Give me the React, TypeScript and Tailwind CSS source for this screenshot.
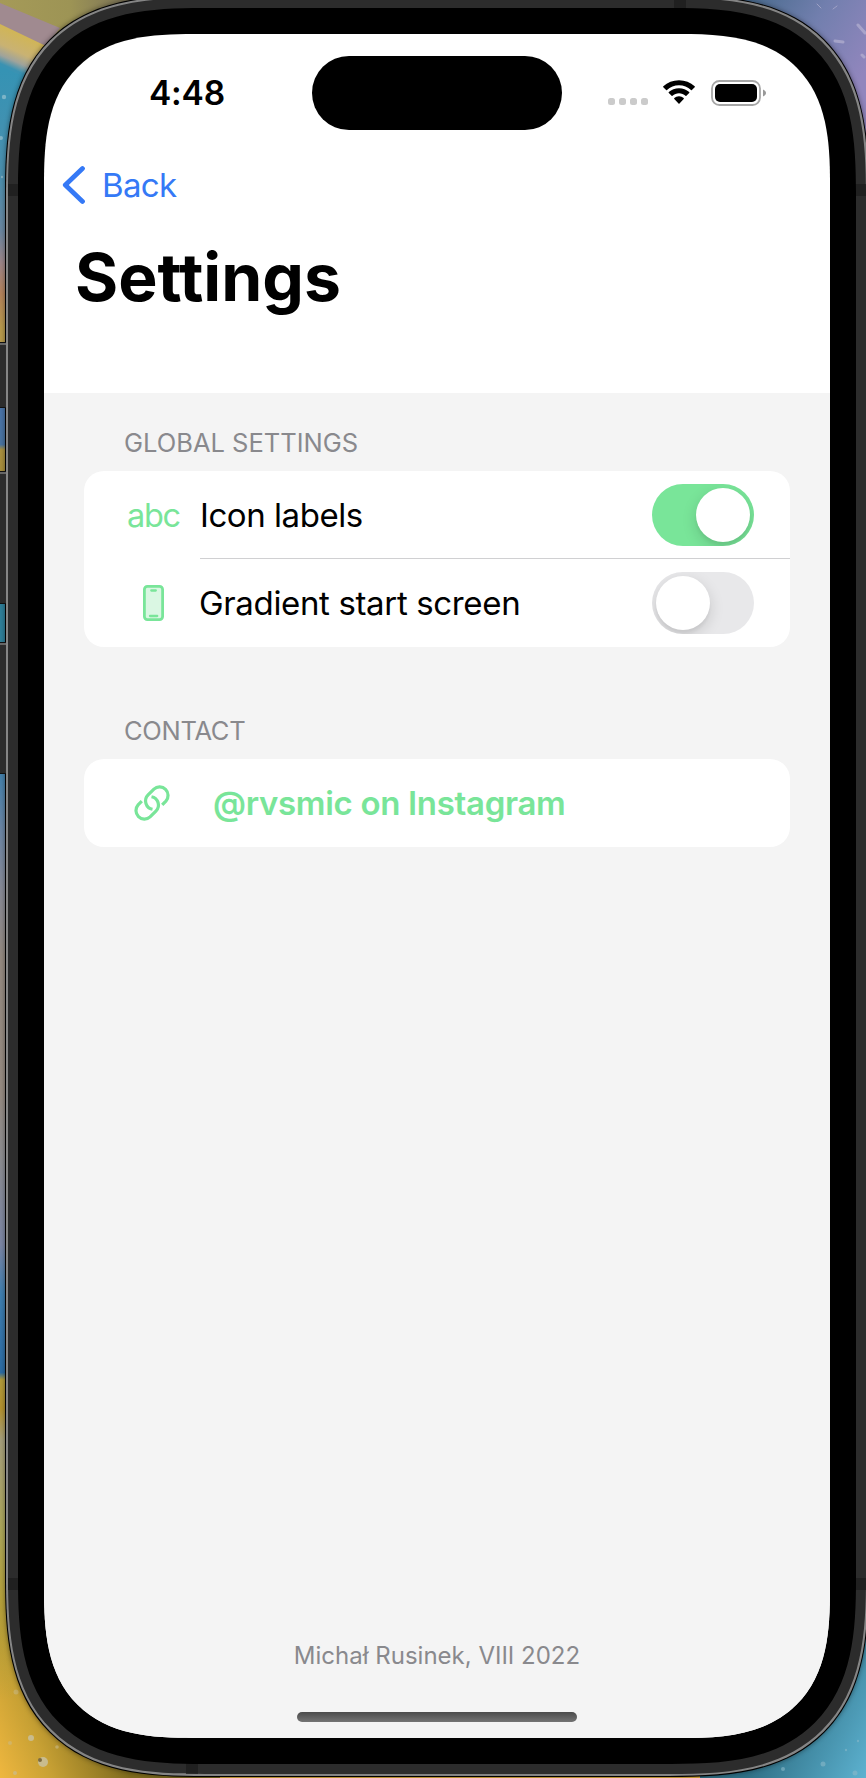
import React from 'react';

function Toggle({ on }: { on: boolean }) {
  return (
    <div
      role="switch"
      aria-checked={on}
      className={
        on
          ? 'flex h-[62px] w-[102px] shrink-0 justify-end overflow-hidden rounded-full bg-[#79e599] p-1'
          : 'flex h-[62px] w-[102px] shrink-0 justify-start overflow-hidden rounded-full bg-[#e8e8ea] p-1'
      }
    >
      <div className="size-[54px] rounded-full bg-white shadow-[0_5px_15px_rgba(0,0,0,0.14),0_4px_3px_rgba(0,0,0,0.04)]" />
    </div>
  );
}

function StatusBar() {
  return (
    <div className="flex h-[118px] shrink-0 items-start pt-[22px]">
      <div className="flex h-[74px] w-[268px] items-center pl-[105px] pt-px text-[33.5px] font-semibold tracking-[-0.2px]">4:48</div>
      <div className="h-[74px] w-[250px] rounded-full bg-black" />
      <div className="flex h-[74px] flex-1 items-center pl-[46px]">
        <div className="mt-[16px] flex gap-[4px]">
          {[0, 1, 2, 3].map((i) => (
            <span key={i} className="size-[7px] rounded-[2.5px] bg-[#cbcbcb]" />
          ))}
        </div>
        <svg className="ml-[14px] h-[26px] w-[34px]" viewBox="0 0 34 26" fill="#000">
          <path d="M17 5.200c4.600 0 8.800 1.800 12 4.800.3.300.6.300.9 0l2.800-2.800c.3-.3.300-.6 0-.9C28.500 2.400 23 .3 17 .3S5.500 2.400 1.300 6.300c-.3.300-.3.600 0 .9L4.100 10c.3.300.6.300.9 0 3.200-3 7.400-4.800 12-4.800z" />
          <path d="M17 13.300c2.500 0 4.700.9 6.500 2.500.3.300.6.300.9 0l2.800-2.700c.3-.3.300-.7 0-1C24.500 9.700 20.900 8.300 17 8.300S9.500 9.700 6.800 12.100c-.3.300-.3.700 0 1l2.800 2.700c.3.300.6.300.9 0 1.800-1.600 4-2.500 6.500-2.500z" />
          <path d="M21.700 18.900c.3-.3.300-.7 0-1A7.300 7.300 0 0 0 17 16.300a7.300 7.300 0 0 0-4.700 1.600c-.3.300-.3.700 0 1l4.200 4.500c.3.300.7.300 1 0z" />
        </svg>
        <svg className="ml-[15px] h-[26px] w-[56px]" viewBox="0 0 56 26">
          <rect x="1" y="1" width="48" height="24" rx="7.500" fill="none" stroke="#a6a6a6" strokeWidth="1.800" />
          <rect x="4" y="4" width="42" height="18" rx="5" fill="#000" />
          <path d="M52 9.500c1.900.7 3 2 3 3.500s-1.100 2.800-3 3.500z" fill="#999" />
        </svg>
      </div>
    </div>
  );
}

function Screen() {
  return (
    <div className="flex h-[1704px] w-[786px] flex-col overflow-hidden rounded-[150px] bg-white [corner-shape:superellipse(1.46)]">
      <StatusBar />
      <div className="flex h-[66px] shrink-0 items-center pl-[18px] text-[#3579f6]">
        <svg className="h-[38px] w-[24px]" viewBox="0 0 24 38" fill="none" stroke="#3579f6" strokeWidth="4.800" strokeLinecap="round" strokeLinejoin="round">
          <path d="M20.500 2.600 3.300 19l17.200 16.400" />
        </svg>
        <span className="pl-[16px] pt-[2px] text-[33px] tracking-[-0.65px]">Back</span>
      </div>
      <h1 className="h-[175px] shrink-0 pl-[31px] pt-[19px] text-[66px] font-bold leading-[80px] tracking-[-0.05px]">Settings</h1>
      <main className="flex flex-1 flex-col bg-[#f4f4f4] px-[40px]">
        <section className="pt-[34px]">
          <h2 className="pl-[40px] text-[25.5px] leading-[32px] text-[#89898d]">GLOBAL SETTINGS</h2>
          <div className="mt-[12px] flex h-[176px] flex-col rounded-[20px] bg-white pl-[44px]">
            <div className="flex h-[88px]">
              <div className="flex w-[72px] items-center pt-[2px] text-[32.5px] tracking-[-1.3px] text-[#79e599]">
                <span className="-ml-px">abc</span>
              </div>
              <div className="flex flex-1 items-center justify-between border-b border-[#d0d0d2] pr-[36px]">
                <span className="pt-[2px] text-[33px] tracking-[-0.45px]">Icon labels</span>
                <Toggle on />
              </div>
            </div>
            <div className="flex h-[88px]">
              <div className="flex w-[71px] items-center pl-[15px]">
                <svg className="h-[36px] w-[21px]" viewBox="0 0 21 36" fill="none" stroke="#79e599">
                  <rect x="1.400" y="1.400" width="18.200" height="33.200" rx="3" fill="#daf7e3" strokeWidth="2.800" />
                  <path d="M8.300 5.500h4.500M7 31h7.200" strokeWidth="2.300" strokeLinecap="round" />
                </svg>
              </div>
              <div className="flex flex-1 items-center justify-between pr-[36px]">
                <span className="pt-[2px] text-[33px] tracking-[-0.35px]">Gradient start screen</span>
                <Toggle on={false} />
              </div>
            </div>
          </div>
        </section>
        <section className="pt-[68px]">
          <h2 className="pl-[40px] text-[25.5px] leading-[32px] tracking-[-0.3px] text-[#89898d]">CONTACT</h2>
          <div className="mt-[12px] flex h-[88px] items-center rounded-[20px] bg-white pl-[50px] text-[#79e599]">
            <svg className="size-[36px]" viewBox="0 0 36 36" fill="none" stroke="#79e599" strokeWidth="3.200">
              <path d="M28.200 19.800 31.900 16.100A8.500 8.500 0 0 0 19.900 4.100L14.100 9.900A8.500 8.500 0 0 0 18.500 24.300" />
              <path d="M7.800 16.200 4.100 19.900A8.500 8.500 0 0 0 16.100 31.900L21.900 26.100A8.500 8.500 0 0 0 17.500 11.700" />
            </svg>
            <span className="pl-[43px] pt-[2px] text-[33px] font-semibold tracking-[-0.32px]">@rvsmic on Instagram</span>
          </div>
        </section>
        <footer className="mt-auto flex flex-col items-center pb-[16px]">
          <p className="text-[24px] leading-[32px] text-[#89898d]">Michał Rusinek, VIII 2022</p>
          <div className="mt-[40px] h-[10px] w-[280px] rounded-full bg-linear-to-b from-[#4b4b4b] to-[#747474]" />
        </footer>
      </main>
    </div>
  );
}

function SideButtons() {
  return (
    <div className="absolute left-0 top-[342px] flex w-[6px] flex-col">
      <div className="h-[66px] border-y border-[#111] bg-[#2c2c2c]">
        <div className="h-[2px] bg-[#666]" />
      </div>
      <div className="mt-[63px] h-[133px] border-y border-[#111] bg-[#2c2c2c]">
        <div className="h-[2px] bg-[#666]" />
      </div>
      <div className="mt-[38px] h-[132px] border-y border-[#111] bg-[#2c2c2c]">
        <div className="h-[2px] bg-[#666]" />
      </div>
    </div>
  );
}

function Wallpaper() {
  return (
    <svg className="absolute inset-0 h-full w-full" viewBox="0 0 866 1778">
      <defs>
        <linearGradient id="side" x1="0" y1="0" x2="0" y2="1778" gradientUnits="userSpaceOnUse">
          <stop offset="0.040" stopColor="#3593b4" />
          <stop offset="0.100" stopColor="#4c8fae" />
          <stop offset="0.130" stopColor="#6b87a0" />
          <stop offset="0.148" stopColor="#9d8688" />
          <stop offset="0.165" stopColor="#b4835c" />
          <stop offset="0.185" stopColor="#b79a4c" />
          <stop offset="0.200" stopColor="#b79a4c" />
          <stop offset="0.230" stopColor="#4a74a8" />
          <stop offset="0.250" stopColor="#4a74a0" />
          <stop offset="0.253" stopColor="#ab9240" />
          <stop offset="0.266" stopColor="#a68d3c" />
          <stop offset="0.300" stopColor="#2f7f99" />
          <stop offset="0.370" stopColor="#2f7f99" />
          <stop offset="0.435" stopColor="#4481ab" />
          <stop offset="0.467" stopColor="#6c86a4" />
          <stop offset="0.500" stopColor="#878a96" />
          <stop offset="0.540" stopColor="#958a80" />
          <stop offset="0.615" stopColor="#968b82" />
          <stop offset="0.650" stopColor="#8d8d90" />
          <stop offset="0.700" stopColor="#7c86a4" />
          <stop offset="0.728" stopColor="#3f7fb0" />
          <stop offset="0.772" stopColor="#2c6ca4" />
          <stop offset="0.776" stopColor="#b29b3a" />
          <stop offset="0.792" stopColor="#b3922f" />
          <stop offset="0.810" stopColor="#a69f7c" />
          <stop offset="0.860" stopColor="#aca65a" />
          <stop offset="0.900" stopColor="#b5a03a" />
          <stop offset="1" stopColor="#e0af3a" />
        </linearGradient>
        <linearGradient id="topLeft" x1="0" y1="0" x2="140" y2="0" gradientUnits="userSpaceOnUse">
          <stop offset="0" stopColor="#a59a58" />
          <stop offset="0.500" stopColor="#9d9455" />
          <stop offset="1" stopColor="#736b58" />
        </linearGradient>
        <linearGradient id="yellowBand" x1="22" y1="30" x2="6" y2="66" gradientUnits="userSpaceOnUse">
          <stop offset="0" stopColor="#d2b650" />
          <stop offset="0.550" stopColor="#c9b273" />
          <stop offset="0.800" stopColor="#9fa39b" />
          <stop offset="1" stopColor="#3a92b2" />
        </linearGradient>
        <linearGradient id="topRight" x1="750" y1="0" x2="866" y2="70" gradientUnits="userSpaceOnUse">
          <stop offset="0" stopColor="#4a6b8e" />
          <stop offset="0.500" stopColor="#727fae" />
          <stop offset="1" stopColor="#9186bd" />
        </linearGradient>
        <linearGradient id="bottomLeft" x1="0" y1="1778" x2="110" y2="1730" gradientUnits="userSpaceOnUse">
          <stop offset="0" stopColor="#efb73f" />
          <stop offset="0.400" stopColor="#c8a134" />
          <stop offset="1" stopColor="#7d6a1c" />
        </linearGradient>
        <linearGradient id="bottomFade" x1="0" y1="1600" x2="0" y2="1700" gradientUnits="userSpaceOnUse">
          <stop offset="0" stopColor="#b5a03a" />
          <stop offset="1" stopColor="#b5a03a" stopOpacity="0" />
        </linearGradient>
        <linearGradient id="bottomRight" x1="770" y1="1730" x2="866" y2="1778" gradientUnits="userSpaceOnUse">
          <stop offset="0" stopColor="#2f7086" />
          <stop offset="1" stopColor="#5db2d0" />
        </linearGradient>
      </defs>
      <rect width="866" height="1778" fill="url(#side)" />
      <path d="M0 0h160v40H60L30 75 0 62z" fill="url(#topLeft)" />
      <path d="M0 22 50 44 32 80 0 66z" fill="url(#yellowBand)" />
      <path d="M0 3 60 28 46 46 0 24z" fill="#a08a90" />
      <g fill="#a9cbd6" opacity="0.600">
        <circle cx="4" cy="97" r="2.200" />
        <circle cx="1" cy="138" r="2" />
        <circle cx="2" cy="177" r="1.200" />
      </g>
      <rect x="700" width="166" height="160" fill="url(#topRight)" />
      <g stroke="#bdb9d6" strokeLinecap="round" opacity="0.600">
        <path d="m835 41 8 1" strokeWidth="3" />
        <path d="m858 25 7 8M862 55l2 2" strokeWidth="3" />
        <path d="m817 4 4 4M833 9l4-3" strokeWidth="1" />
      </g>
      <path d="M0 1600h220v178H0z" fill="url(#bottomLeft)" />
      <path d="M0 1600h220v100H0z" fill="url(#bottomFade)" />
      <g fill="#c9bc8e">
        <circle cx="43" cy="1762" r="5" />
        <circle cx="40" cy="1760" r="2" fill="#7d6b3f" />
        <circle cx="31" cy="1738" r="3" />
        <circle cx="57" cy="1747" r="1.800" opacity="0.600" />
        <circle cx="16" cy="1692" r="2.500" opacity="0.500" />
        <circle cx="10" cy="1743" r="2" opacity="0.500" />
        <circle cx="15" cy="1773" r="2" opacity="0.700" />
      </g>
      <path d="M700 1600h166v178H700z" fill="url(#bottomRight)" />
      <g fill="#8ab9c9" opacity="0.600">
        <circle cx="823" cy="1764" r="2.500" />
        <circle cx="855" cy="1773" r="2.500" />
        <circle cx="783" cy="1769" r="2" />
        <circle cx="858" cy="1741" r="1.200" />
        <circle cx="846" cy="1750" r="1.200" />
      </g>
    </svg>
  );
}

export default function App() {
  return (
    <div className="relative h-[1778px] w-[866px] overflow-hidden bg-[#4a8bb0] font-[Inter,'Liberation_Sans',sans-serif] text-black">
      <Wallpaper />
      <div className="relative -mt-[5px] ml-[5px] w-[864px] rounded-[200px] bg-black p-px shadow-[0_0_5px_rgba(0,0,0,0.45)] [corner-shape:superellipse(1.46)]">
        <div className="rounded-[199px] bg-[#858585] p-[2px] [corner-shape:superellipse(1.46)]">
          <div className="relative overflow-hidden rounded-[197px] bg-[#2c2c2c] p-[10px] [corner-shape:superellipse(1.46)]">
            <div className="absolute left-0 top-[186px] h-[12px] w-full bg-[#202020]" />
            <div className="absolute left-0 top-[1580px] h-[12px] w-full bg-[#202020]" />
            <div className="absolute left-[666px] top-0 h-[20px] w-[12px] bg-[#202020]" />
            <div className="absolute bottom-0 left-[178px] h-[20px] w-[12px] bg-[#202020]" />
            <div className="relative rounded-[185px] bg-black p-[26px] [corner-shape:superellipse(1.46)]">
              <Screen />
            </div>
          </div>
        </div>
      </div>
      <SideButtons />
    </div>
  );
}
